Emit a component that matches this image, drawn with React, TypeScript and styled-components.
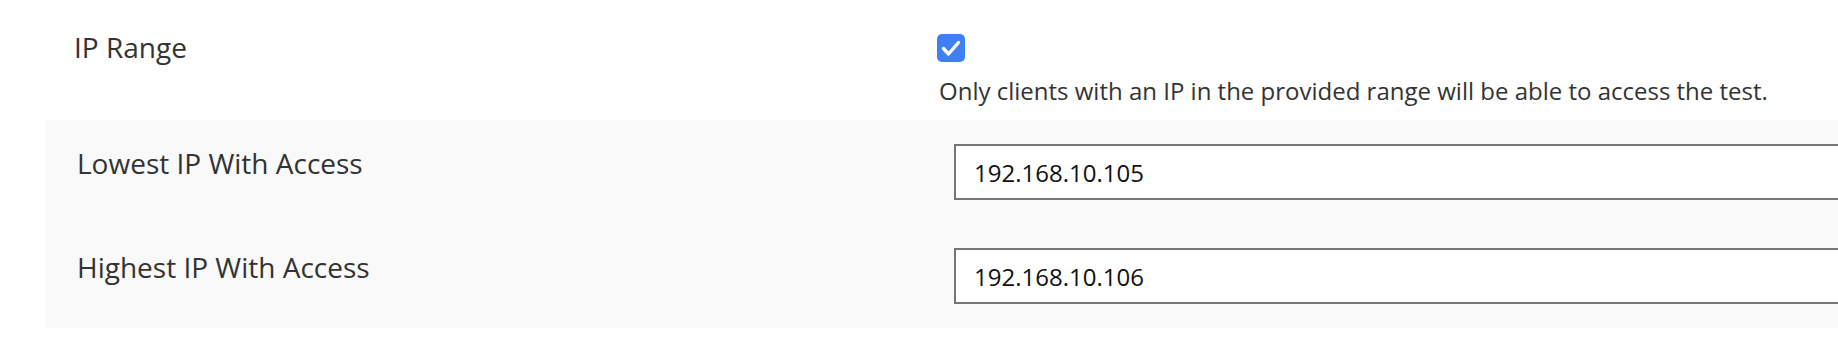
import React from 'react';
import styled, { createGlobalStyle } from 'styled-components';

const GlobalStyles = createGlobalStyle`
  html, body {
    margin: 0;
    padding: 0;
    background: #fff;
    overflow: hidden;
  }
  body {
    font-family: "Open Sans", "Noto Sans", sans-serif;
    color: #333;
  }
`;

const App: React.FC = () => {
  return (
    <Page>
      <GlobalStyles />
      <FormRow>
        <RowLabel>IP Range</RowLabel>
        <Control>
          <CheckBox role="checkbox" aria-checked="true">
            <svg width="28" height="28" viewBox="0 0 28 28">
              <path
                d="M6.5 14.5 L11.5 20 L21.5 8.5"
                fill="none"
                stroke="#fff"
                strokeWidth="3.4"
                strokeLinecap="round"
                strokeLinejoin="round"
              />
            </svg>
          </CheckBox>
          <Hint>Only clients with an IP in the provided range will be able to access the test.</Hint>
        </Control>
      </FormRow>

      <SubPanel>
        <SubRow>
          <SubLabel>Lowest IP With Access</SubLabel>
          <TextInput defaultValue="192.168.10.105" />
        </SubRow>
        <SubRow>
          <SubLabel>Highest IP With Access</SubLabel>
          <TextInput defaultValue="192.168.10.106" />
        </SubRow>
      </SubPanel>
    </Page>
  );
};

const Page = styled.div`
  width: 1960px;
  padding: 28px 0 0 46px;
  box-sizing: border-box;
`;

const FormRow = styled.div`
  display: grid;
  grid-template-columns: 891px 1fr;
  align-items: start;
`;

const RowLabel = styled.div`
  padding-left: 28px;
  font-size: 28px;
  line-height: 38px;
  color: #333;
`;

const Control = styled.div`
  display: flex;
  flex-direction: column;
  align-items: flex-start;
`;

const CheckBox = styled.span`
  display: block;
  width: 28px;
  height: 28px;
  margin-top: 6px;
  border-radius: 5px;
  background: #3e7ff3;

  svg {
    display: block;
  }
`;

const Hint = styled.div`
  margin-top: 11px;
  padding-left: 2px;
  font-size: 24px;
  line-height: 36px;
  color: #333;
`;

const SubPanel = styled.div`
  margin-top: 11px;
  background: #f9f9f9;
`;

const SubRow = styled.div`
  display: grid;
  grid-template-columns: 877px 1fr;
  align-items: start;
  padding: 24px 0 24px 31px;
`;

const SubLabel = styled.div`
  font-size: 28px;
  line-height: 38px;
  color: #333;
`;

const TextInput = styled.input`
  box-sizing: border-box;
  width: 100%;
  height: 56px;
  margin: 0;
  padding: 0 18px;
  border: 2px solid #767676;
  border-radius: 0;
  background: #fff;
  font-family: "Open Sans", "Noto Sans", sans-serif;
  font-size: 24px;
  color: #111;
  outline: none;
`;

export default App;
